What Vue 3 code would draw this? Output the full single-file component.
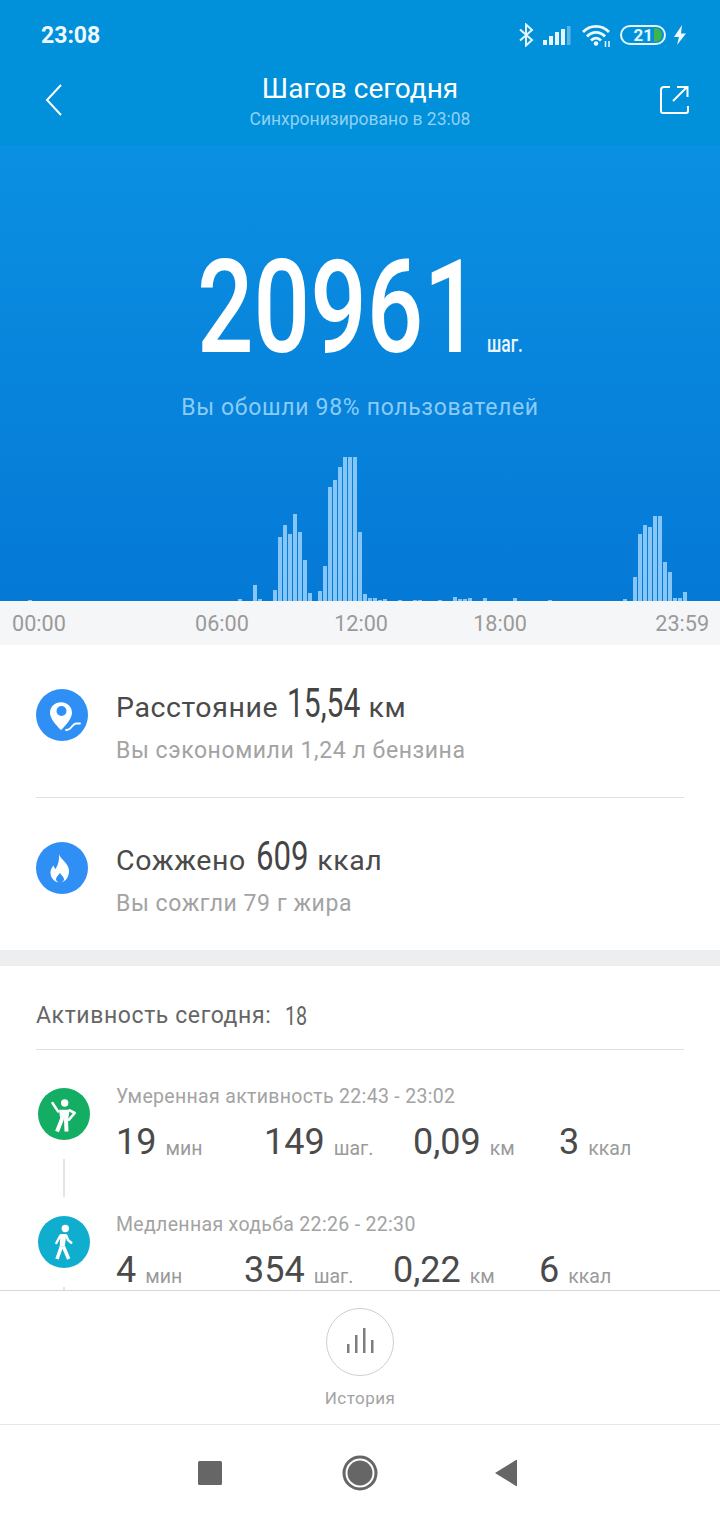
<template>
  <div class="page">
    <div class="top">
      <div class="status">
        <span class="clock">23:08</span>
        <div class="status-icons">
          <svg width="16" height="24" viewBox="0 0 16 24" fill="none" stroke="#e6f4fc" stroke-width="2">
            <path d="M1 6.500l12 10.500-6 5.500V1.500l6 5.500L1 17.500" />
          </svg>
          <svg class="signal" width="28" height="20" viewBox="0 0 28 20" fill="#e6f4fc">
            <rect x="0" y="15" width="4" height="5" />
            <rect x="6" y="11" width="4" height="9" />
            <rect x="12" y="7" width="4" height="13" />
            <rect x="18" y="4" width="4" height="16" />
            <rect x="24" y="1" width="3.500" height="19" fill="#5fb4e6" />
          </svg>
          <svg width="30" height="24" viewBox="0 0 30 24" fill="none" stroke="#eef8fd" stroke-width="2.800">
            <path d="M1 9C8 1.500 20 1.500 27 9M5 13.500C10 8 18 8 23 13.500M9 17.500C12 14.500 16 14.500 19 17.500" />
            <circle cx="14" cy="20.500" r="2.300" fill="#eef8fd" stroke="none" />
            <path d="M23.500 18v6M27 18v6" stroke-width="1.500" />
          </svg>
          <div class="battery">
            <span>21</span>
            <i class="battery-fill"></i>
          </div>
          <svg width="14" height="20" viewBox="0 0 14 20" fill="#eef8fd">
            <path d="M9 0 1 12h5l-2 8 9-11.500H8z" />
          </svg>
        </div>
      </div>
      <div class="nav">
        <svg class="back" width="20" height="34" viewBox="0 0 20 34" fill="none" stroke="#fff" stroke-width="2">
          <path d="M17 2 3 17l14 15" />
        </svg>
        <div class="nav-title">
          <div class="title">Шагов сегодня</div>
          <div class="synced">Синхронизировано в 23:08</div>
        </div>
        <svg class="share" width="30" height="30" viewBox="0 0 30 30" fill="none" stroke="#fff" stroke-width="2">
          <path d="M11 2H5a3 3 0 0 0-3 3v21a2 2 0 0 0 2 2h23a2 2 0 0 0 2-2v-5M14 16 28 2M18 2h10.500v10" />
        </svg>
      </div>
    </div>

    <div class="hero">
      <div class="total">
        <span class="total-num">20961</span>
        <span class="total-unit">шаг.</span>
      </div>
      <div class="percent">Вы обошли 98% пользователей</div>
      <div class="chart">
        <i v-for="(h, i) in bars" :key="i" class="bar" :style="{ height: h + 'px' }"></i>
      </div>
    </div>

    <div class="axis">
      <span v-for="t in ticks" :key="t">{{ t }}</span>
    </div>

    <div class="summary">
      <div class="summary-row">
        <div class="round blue">
          <svg width="52" height="52" viewBox="0 0 52 52">
            <path fill="#fff" fill-rule="evenodd" d="M25 13.300c6.100 0 11 4.600 11 10.400 0 5.500-6 12.500-11 17.300-5-4.800-11-11.800-11-17.300 0-5.800 4.900-10.400 11-10.400zm.5 3.700a5 5 0 1 0 0 10 5 5 0 0 0 0-10z" />
            <path fill="none" stroke="#fff" stroke-width="1.800" stroke-linecap="round" d="M30 41c2.500 0 4-1 5.500-3 1.500-2 3-3.500 5-3.500H44" />
          </svg>
        </div>
        <div class="summary-text">
          <div class="summary-main">Расстояние <b class="dist">15,54</b> км</div>
          <div class="summary-sub">Вы сэкономили 1,24 л бензина</div>
        </div>
      </div>
      <div class="summary-row second">
        <div class="round blue">
          <svg width="52" height="52" viewBox="0 0 52 52">
            <path fill="#fff" fill-rule="evenodd" d="M23 12c1 5 10 9 10 17 0 6.500-4 11.500-9 11.500-5.500 0-9.500-4.500-9.500-10 0-3 1.500-5 3-7 .5 1.500 1 2.500 2 3.500 2.500-3.500 4-9 3.500-15zm1 19c-2 2.500-4 4-4 6.500 0 1.500 2 3 4 3s4-1.500 4-3c0-2.500-2.500-4-4-6.500z" />
          </svg>
        </div>
        <div class="summary-text">
          <div class="summary-main">Сожжено <b class="kcal">609</b> ккал</div>
          <div class="summary-sub">Вы сожгли 79 г жира</div>
        </div>
      </div>
    </div>

    <div class="band"></div>

    <div class="activity">
      <div class="activity-head">
        Активность сегодня: <b>18</b>
      </div>
      <div class="records">
        <div v-for="r in records" :key="r.label" class="record">
          <div class="rail">
            <div class="round" :class="r.tone">
              <svg v-if="r.tone === 'green'" width="52" height="52" viewBox="0 0 52 52">
                <circle cx="26.700" cy="15" r="3.700" fill="#fff" />
                <path fill="#fff" d="M21 21.700h10.700L30 31.700h-7.700z" />
                <path fill="none" stroke="#fff" stroke-width="2.600" stroke-linecap="round" stroke-linejoin="round" d="M14.500 15 20 23.400M31.700 22.400l5 2.600-5.700 6.700" />
                <path fill="none" stroke="#fff" stroke-width="4" d="M24 31 19 43.500M28 31l.5 12.500" />
              </svg>
              <svg v-else width="52" height="52" viewBox="0 0 52 52">
                <circle cx="27.300" cy="12.500" r="3.700" fill="#fff" />
                <path fill="#fff" d="M22.400 18h6l-1.700 12.700h-5z" />
                <path fill="none" stroke="#fff" stroke-width="2.400" stroke-linecap="round" stroke-linejoin="round" d="M22.400 19.700 18.300 27M28.400 19.700l1.600 4.300 3.300 2.700" />
                <path fill="none" stroke="#fff" stroke-width="3.500" d="M23.400 30.700 19 43M25.500 30.700 30.700 43" />
              </svg>
            </div>
            <i class="rail-line"></i>
          </div>
          <div class="record-body">
            <div class="record-label">{{ r.label }}</div>
            <div class="record-stats">
              <div v-for="s in r.stats" :key="s.unit" class="stat" :style="{ width: s.w + 'px' }">
                <span class="stat-num">{{ s.num }}</span>
                <span class="stat-unit">{{ s.unit }}</span>
              </div>
            </div>
          </div>
        </div>
      </div>
    </div>

    <div class="history">
      <div class="history-btn">
        <svg width="30" height="26" viewBox="0 0 30 26" fill="#7d7d7d">
          <rect x="2" y="16" width="2.500" height="9" />
          <rect x="10" y="7" width="2.500" height="18" />
          <rect x="18" y="0" width="2.500" height="25" />
          <rect x="26" y="12" width="2.500" height="13" />
        </svg>
      </div>
      <div class="history-label">История</div>
    </div>

    <div class="sysbar">
      <svg width="24" height="24" viewBox="0 0 24 24"><rect width="24" height="24" rx="1.500" fill="#666" /></svg>
      <svg class="home" width="36" height="36" viewBox="0 0 36 36" fill="#666">
        <circle cx="18" cy="18" r="16" fill="none" stroke="#666" stroke-width="3" />
        <circle cx="18" cy="18" r="12.500" />
      </svg>
      <svg width="24" height="28" viewBox="0 0 24 28"><path d="M23 1v26a1 1 0 0 1-1 0L1 14 22 1a1 1 0 0 1 1 0z" fill="#666" /></svg>
    </div>
  </div>
</template>

<script setup>
const ticks = ['00:00', '06:00', '12:00', '18:00', '23:59']

// one bar per 10 minutes, only the non-empty ones are listed
const heights = {
  5: 1, 47: 2, 50: 16, 51: 2, 54: 11, 55: 64, 56: 76, 57: 67, 58: 87, 59: 69, 60: 41, 61: 8,
  63: 10, 64: 35, 65: 114, 66: 121, 67: 134, 68: 144, 69: 144, 70: 144, 71: 69, 72: 7, 73: 3,
  74: 3, 75: 1, 76: 2, 79: 1, 82: 1, 83: 1, 87: 1, 90: 4, 91: 2, 92: 2, 93: 3, 96: 3, 102: 3,
  109: 1, 124: 2, 126: 24, 127: 67, 128: 76, 129: 74, 130: 85, 131: 85, 132: 39, 133: 29,
  134: 3, 135: 3, 136: 9,
}
const bars = Array.from({ length: 144 }, (_, i) => heights[i] || 0)

const records = [
  {
    label: 'Умеренная активность 22:43 - 23:02',
    tone: 'green',
    stats: [
      { num: '19', unit: 'мин', w: 148 },
      { num: '149', unit: 'шаг.', w: 149 },
      { num: '0,09', unit: 'км', w: 146 },
      { num: '3', unit: 'ккал', w: 80 },
    ],
  },
  {
    label: 'Медленная ходьба 22:26 - 22:30',
    tone: 'teal',
    stats: [
      { num: '4', unit: 'мин', w: 128 },
      { num: '354', unit: 'шаг.', w: 149 },
      { num: '0,22', unit: 'км', w: 146 },
      { num: '6', unit: 'ккал', w: 80 },
    ],
  },
]
</script>

<style>
body {
  background: #fff;
}
</style>

<style scoped>
.page {
  width: 720px;
  height: 1520px;
  display: flex;
  flex-direction: column;
  overflow: hidden;
  background: #fff;
  font-family: Roboto, "Noto Sans", sans-serif;
}

.top {
  height: 145px;
  background: #0091da;
  color: #fff;
  flex: none;
}

.status {
  height: 70px;
  display: flex;
  align-items: center;
  justify-content: space-between;
  padding: 0 33px 0 41px;
}

.clock {
  font-size: 23px;
  font-weight: 700;
  color: #eef8fd;
}

.status-icons {
  display: flex;
  align-items: center;
  gap: 8px;
}

.signal {
  margin-right: 3px;
}

.battery {
  width: 46px;
  height: 20px;
  box-sizing: border-box;
  margin-right: -1px;
  border: 2px solid #e6f4fc;
  border-radius: 10px;
  display: flex;
  align-items: center;
  justify-content: flex-end;
  gap: 1px;
  padding-right: 2px;
  font-size: 17px;
  font-weight: 700;
  color: #e6f4fc;
}

.battery-fill {
  width: 8px;
  height: 14px;
  background: #3db54a;
  border-radius: 0 7px 7px 0;
}

.nav {
  display: grid;
  grid-template-columns: 1fr auto 1fr;
  align-items: start;
  padding: 0 31px;
}

.back {
  margin-top: 13px;
  margin-left: 13px;
}

.share {
  margin-top: 15px;
  justify-self: end;
}

.nav-title {
  text-align: center;
  margin-top: 1px;
}

.title {
  font-size: 28px;
  line-height: 36px;
}

.synced {
  font-size: 17.500px;
  line-height: 24px;
  color: #8fd0f4;
}

.hero {
  height: 456px;
  flex: none;
  background: linear-gradient(#0a90e2, #0579d6);
  display: flex;
  flex-direction: column;
  align-items: center;
}

.total {
  margin-top: 93px;
  height: 140px;
  padding-right: 1px;
  display: flex;
  align-items: baseline;
  justify-content: center;
}

.total-num {
  display: inline-block;
  width: 280px;
  transform: scaleX(0.766);
  transform-origin: left center;
  font-size: 130px;
  font-weight: 500;
  line-height: 140px;
  color: #fff;
}

.total-unit {
  display: inline-block;
  width: 35px;
  margin-left: 10px;
  transform: scaleX(0.76);
  transform-origin: left center;
  font-size: 23px;
  font-weight: 500;
  color: #eaf6fe;
  white-space: nowrap;
}

.percent {
  margin-top: 15px;
  font-size: 23px;
  line-height: 30px;
  color: #8accf7;
  letter-spacing: 0.670px;
}

.chart {
  margin-top: auto;
  width: 720px;
  height: 144px;
  box-sizing: border-box;
  padding-left: 3px;
  display: flex;
  align-items: flex-end;
  gap: 1px;
}

.bar {
  flex: none;
  width: 4px;
  background: #85c6f6;
}

.axis {
  height: 44px;
  flex: none;
  background: #f5f6f8;
  display: flex;
  align-items: center;
  gap: 85.300px;
  padding: 0 12px;
  font-size: 21.600px;
  color: #9a9a9a;
}

.axis span:first-child {
  margin-right: 44px;
}

.axis span:last-child {
  margin-left: 43px;
}

.summary {
  height: 305px;
  flex: none;
  box-sizing: border-box;
  padding: 0 36px;
}

.summary-row {
  height: 153px;
  box-sizing: border-box;
  display: flex;
  align-items: flex-start;
  gap: 28px;
  padding-top: 44px;
  border-bottom: 1px solid #e0e0e0;
}

.summary-row.second {
  height: 152px;
  border-bottom: 0;
}

.summary-text {
  margin-top: -5.500px;
}

.round {
  width: 52px;
  height: 52px;
  flex: none;
  border-radius: 50%;
}

.round svg {
  display: block;
}

.blue {
  background: #2f8ff5;
}

.green {
  background: #13ad63;
}

.teal {
  background: #10aece;
}

.summary-main {
  height: 40px;
  font-size: 28.500px;
  line-height: 40px;
  letter-spacing: 0.600px;
  color: #4a4a4a;
  white-space: nowrap;
}

.summary-main b {
  display: inline-block;
  transform: scaleX(0.75);
  transform-origin: left center;
  font-size: 40px;
  font-weight: 400;
  line-height: 1;
  letter-spacing: 0;
  color: #444;
}

.summary-main b.dist {
  width: 74px;
  margin-left: 1px;
}

.summary-main b.kcal {
  width: 54px;
  margin-left: 2px;
  transform: scaleX(0.78);
}

.summary-sub {
  margin-top: 12.500px;
  font-size: 23px;
  line-height: 30px;
  letter-spacing: 0.570px;
  color: #a3a3a3;
}

.band {
  height: 16px;
  flex: none;
  background: #eceeef;
}

.activity {
  height: 324px;
  flex: none;
  overflow: hidden;
  box-sizing: border-box;
  padding: 0 36px;
}

.activity-head {
  height: 84px;
  box-sizing: border-box;
  padding-top: 16px;
  border-bottom: 1px solid #e0e0e0;
  display: flex;
  align-items: center;
  gap: 14px;
  font-size: 23px;
  letter-spacing: 0.600px;
  color: #666;
}

.activity-head b {
  display: inline-block;
  width: 22px;
  transform: scaleX(0.76);
  transform-origin: left center;
  font-size: 26px;
  font-weight: 400;
  letter-spacing: 0;
  color: #666;
}

.records {
  display: flex;
  flex-direction: column;
}

.record {
  height: 128px;
  flex: none;
  display: flex;
  gap: 26px;
  padding-left: 2px;
}

.rail {
  width: 52px;
  display: flex;
  flex-direction: column;
  align-items: center;
  padding-top: 38px;
}

.rail-line {
  width: 2px;
  height: 38px;
  flex: none;
  margin-top: 19px;
  background: #e4e4e4;
}

.record-body {
  padding-top: 34px;
}

.record-label {
  font-size: 19.500px;
  line-height: 26px;
  letter-spacing: 0.320px;
  color: #a3a3a3;
  white-space: nowrap;
}

.record-stats {
  display: flex;
  margin-top: 10px;
}

.stat {
  flex: none;
  white-space: nowrap;
}

.stat-num {
  font-size: 36px;
  line-height: 44px;
  color: #4a4a4a;
}

.stat-unit {
  margin-left: 9px;
  font-size: 19.500px;
  vertical-align: -1px;
  color: #9a9a9a;
}

.history {
  height: 135px;
  flex: none;
  box-sizing: border-box;
  border-top: 1px solid #d6d6d6;
  border-bottom: 1px solid #e6e6e6;
  background: #fff;
  display: flex;
  flex-direction: column;
  align-items: center;
  padding-top: 17px;
}

.history-btn {
  width: 68px;
  height: 68px;
  box-sizing: border-box;
  border: 1px solid #cfcfcf;
  border-radius: 50%;
  display: flex;
  align-items: center;
  justify-content: center;
}

.history-btn svg {
  margin-bottom: 2px;
}

.history-label {
  margin-top: 10px;
  font-size: 17px;
  line-height: 24px;
  letter-spacing: 0.500px;
  color: #a3a3a3;
}

.sysbar {
  flex: 1;
  display: flex;
  align-items: center;
  justify-content: space-between;
  padding: 0 202px 0 198px;
  box-sizing: border-box;
}

.home {
  margin-left: 4px;
}
</style>
